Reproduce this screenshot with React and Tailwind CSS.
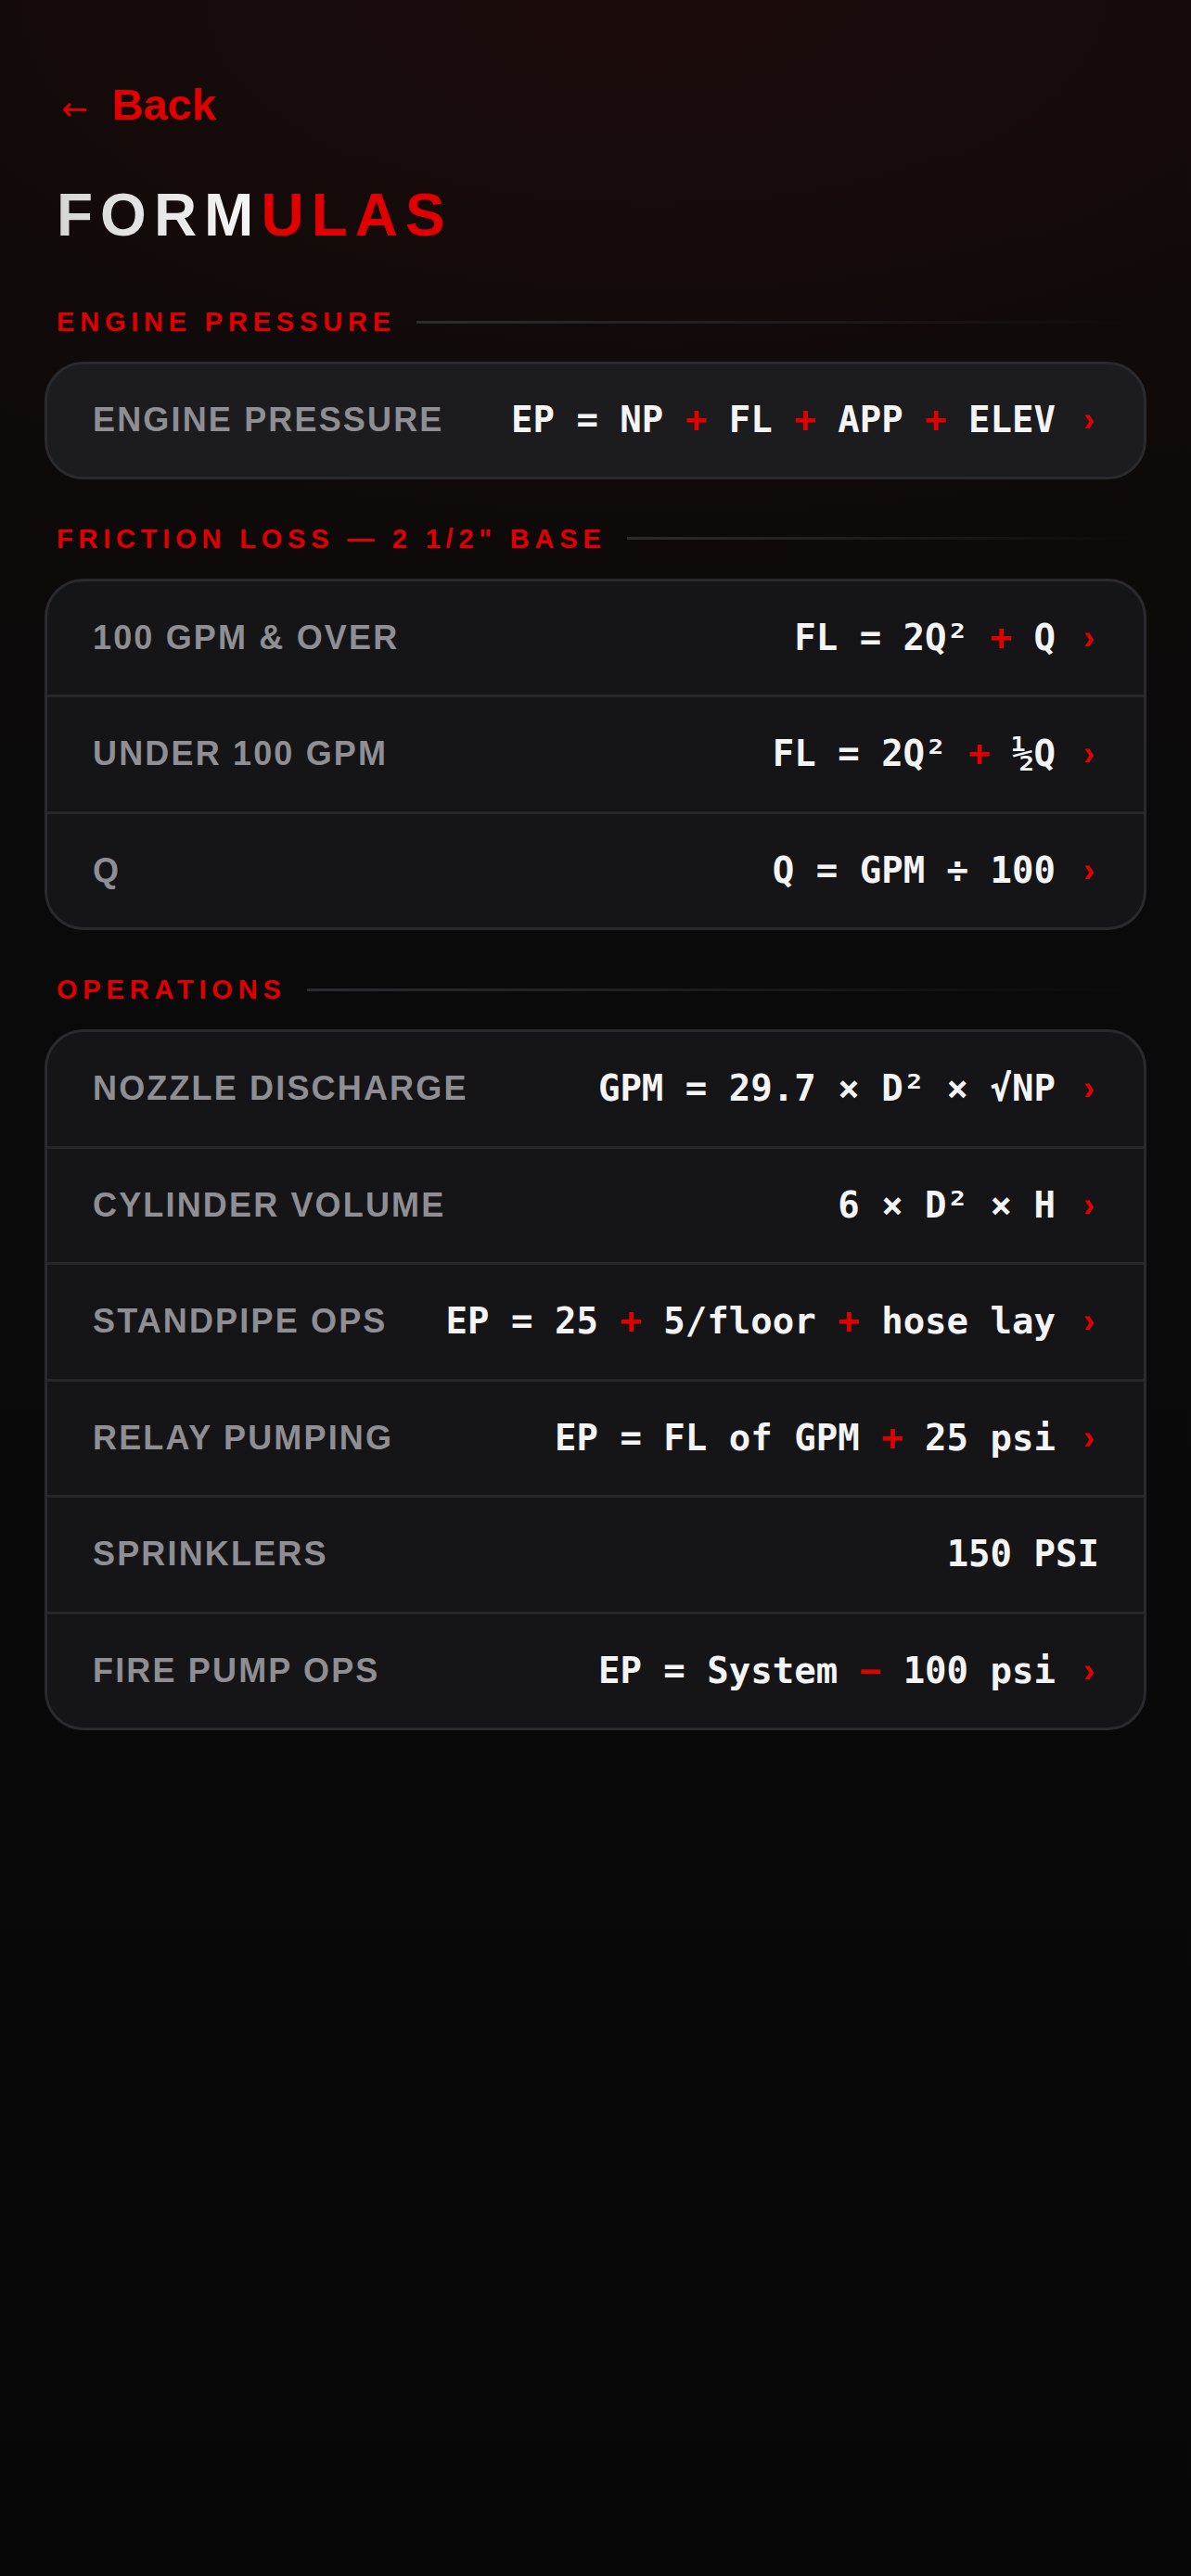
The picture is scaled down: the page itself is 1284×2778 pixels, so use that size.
const RED = "text-[#e00000]";

function Op({ children }) {
  return <span className={RED}>{children}</span>;
}

function SectionTitle({ children }) {
  return (
    <div className="flex items-center gap-[22px] px-[13px] mb-[25px]">
      <h2 className="text-[29px] leading-[36px] font-bold tracking-[0.2em] text-[#e00000] whitespace-nowrap">
        {children}
      </h2>
      <div className="flex-1 h-[3px] bg-gradient-to-r from-[#2c2c30] to-transparent" />
    </div>
  );
}

function Row({ label, formula, arrow = true, tight = false }) {
  return (
    <div
      className={`flex items-center pl-[49px] pr-[48px] ${tight ? "py-[39px]" : "py-[40px]"} leading-[42.5px]`}
    >
      <span className="text-[36px] font-bold tracking-[0.06em] text-[#8e8e93] whitespace-nowrap">
        {label}
      </span>
      <div className="flex-1" />
      <span className="font-['DejaVu_Sans_Mono',monospace] text-[39px] font-bold text-[#f4f4f5] whitespace-pre">
        {formula}
      </span>
      {arrow && (
        <span className="ml-[30px] mr-[5px] text-[36px] font-bold text-[#e00000]">›</span>
      )}
    </div>
  );
}

function Card({ children, light = false }) {
  return (
    <div
      className={`rounded-[42px] border-[3px] border-[#2a2a2e] overflow-hidden divide-y-[3px] divide-[#27272a] ${
        light ? "bg-[#1c1c1f]" : "bg-[#151517]"
      }`}
    >
      {children}
    </div>
  );
}

export default function App() {
  return (
    <div className="min-h-[2778px] w-full font-['Liberation_Sans',Arial,sans-serif] bg-[#080808] bg-[radial-gradient(130%_28%_at_55%_0%,#1c0b0b_0%,rgba(18,10,10,0.7)_55%,transparent_100%),linear-gradient(180deg,#0f0a0a_0%,#0a0a0a_40%,#070707_100%)]">
      <div className="px-[48px] pt-[89px] pb-[120px]">
        {/* Back link */}
        <button className="flex items-baseline gap-[26px] pl-[18px] text-[#e00000]">
          <span className="font-['DejaVu_Sans',sans-serif] text-[34px] leading-[48px]">←</span>
          <span className="text-[47px] leading-[48px] font-bold">Back</span>
        </button>

        {/* Title */}
        <h1 className="mt-[55px] pl-[13px] text-[64px] leading-[72px] font-bold tracking-[0.125em]">
          <span className="bg-gradient-to-r from-[#d6d6d6] to-[#f7f7f7] bg-clip-text text-transparent">
            FORM
          </span>
          <span className={RED}>ULAS</span>
        </h1>

        {/* Engine pressure */}
        <section className="mt-[61px]">
          <SectionTitle>ENGINE PRESSURE</SectionTitle>
          <Card light>
            <Row
              tight
              label="ENGINE PRESSURE"
              formula={
                <>
                  EP = NP <Op>+</Op> FL <Op>+</Op> APP <Op>+</Op> ELEV
                </>
              }
            />
          </Card>
        </section>

        {/* Friction loss */}
        <section className="mt-[46px]">
          <SectionTitle>{'FRICTION LOSS — 2 1/2" BASE'}</SectionTitle>
          <Card>
            <Row
              label="100 GPM & OVER"
              formula={
                <>
                  FL = 2Q² <Op>+</Op> Q
                </>
              }
            />
            <Row
              label="UNDER 100 GPM"
              formula={
                <>
                  FL = 2Q² <Op>+</Op> ½Q
                </>
              }
            />
            <Row label="Q" formula="Q = GPM ÷ 100" />
          </Card>
        </section>

        {/* Operations */}
        <section className="mt-[46px]">
          <SectionTitle>OPERATIONS</SectionTitle>
          <Card>
            <Row label="NOZZLE DISCHARGE" formula="GPM = 29.7 × D² × √NP" />
            <Row label="CYLINDER VOLUME" formula="6 × D² × H" />
            <Row
              label="STANDPIPE OPS"
              formula={
                <>
                  EP = 25 <Op>+</Op> 5/floor <Op>+</Op> hose lay
                </>
              }
            />
            <Row
              label="RELAY PUMPING"
              formula={
                <>
                  EP = FL of GPM <Op>+</Op> 25 psi
                </>
              }
            />
            <Row label="SPRINKLERS" formula="150 PSI" arrow={false} />
            <Row
              label="FIRE PUMP OPS"
              formula={
                <>
                  EP = System <Op>−</Op> 100 psi
                </>
              }
            />
          </Card>
        </section>
      </div>
    </div>
  );
}
